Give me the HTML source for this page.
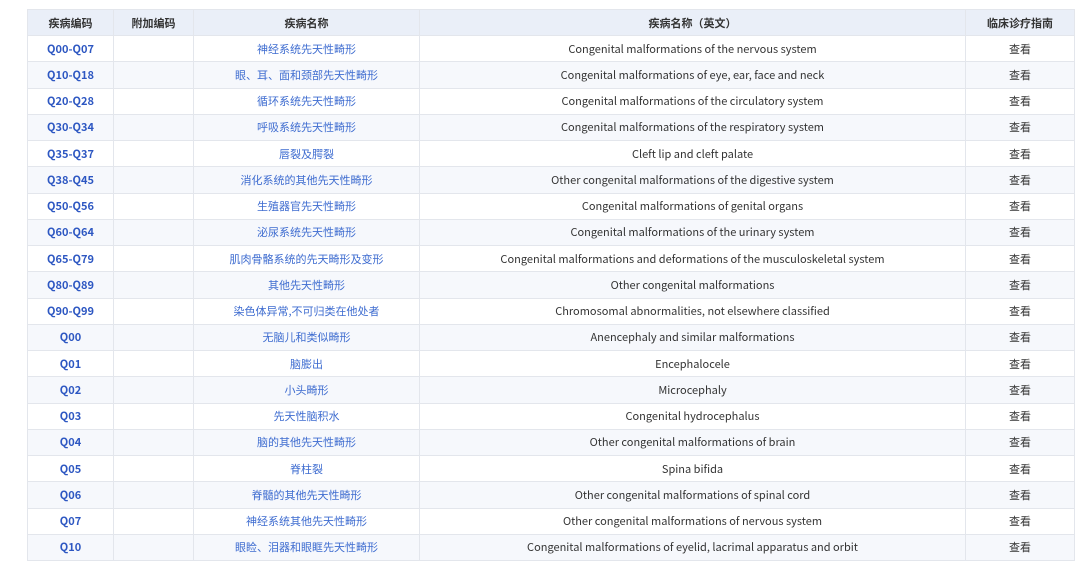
<!DOCTYPE html>
<html><head><meta charset="utf-8"><style>
body{margin:0;background:#fff;width:1080px;height:569px;overflow:hidden;font-family:"Noto Sans CJK SC",sans-serif;}
table{position:absolute;left:27px;top:9px;border-collapse:collapse;width:1047px;table-layout:fixed;font-size:11px;}
td,th{border:1px solid #e3e6ec;text-align:center;padding:0;height:25.25px;white-space:nowrap;line-height:14px;vertical-align:middle;}
th{background:#eaeff8;color:#333;font-weight:bold;height:25px;}
tr:nth-child(odd) td{background:#f6f8fc;}
td.c{color:#2d57c2;font-weight:bold;}
td.n{color:#3e6cd0;}
td.v,td.e{color:#333;}
</style></head><body>
<table>
<colgroup><col style="width:86px"><col style="width:80px"><col style="width:226px"><col style="width:546px"><col style="width:109px"></colgroup>
<tr><th>疾病编码</th><th>附加编码</th><th>疾病名称</th><th>疾病名称（英文）</th><th>临床诊疗指南</th></tr>
<tr><td class="c">Q00-Q07</td><td></td><td class="n">神经系统先天性畸形</td><td class="e">Congenital malformations of the nervous system</td><td class="v">查看</td></tr>
<tr><td class="c">Q10-Q18</td><td></td><td class="n">眼、耳、面和颈部先天性畸形</td><td class="e">Congenital malformations of eye, ear, face and neck</td><td class="v">查看</td></tr>
<tr><td class="c">Q20-Q28</td><td></td><td class="n">循环系统先天性畸形</td><td class="e">Congenital malformations of the circulatory system</td><td class="v">查看</td></tr>
<tr><td class="c">Q30-Q34</td><td></td><td class="n">呼吸系统先天性畸形</td><td class="e">Congenital malformations of the respiratory system</td><td class="v">查看</td></tr>
<tr><td class="c">Q35-Q37</td><td></td><td class="n">唇裂及腭裂</td><td class="e">Cleft lip and cleft palate</td><td class="v">查看</td></tr>
<tr><td class="c">Q38-Q45</td><td></td><td class="n">消化系统的其他先天性畸形</td><td class="e">Other congenital malformations of the digestive system</td><td class="v">查看</td></tr>
<tr><td class="c">Q50-Q56</td><td></td><td class="n">生殖器官先天性畸形</td><td class="e">Congenital malformations of genital organs</td><td class="v">查看</td></tr>
<tr><td class="c">Q60-Q64</td><td></td><td class="n">泌尿系统先天性畸形</td><td class="e">Congenital malformations of the urinary system</td><td class="v">查看</td></tr>
<tr><td class="c">Q65-Q79</td><td></td><td class="n">肌肉骨骼系统的先天畸形及变形</td><td class="e">Congenital malformations and deformations of the musculoskeletal system</td><td class="v">查看</td></tr>
<tr><td class="c">Q80-Q89</td><td></td><td class="n">其他先天性畸形</td><td class="e">Other congenital malformations</td><td class="v">查看</td></tr>
<tr><td class="c">Q90-Q99</td><td></td><td class="n">染色体异常,不可归类在他处者</td><td class="e">Chromosomal abnormalities, not elsewhere classified</td><td class="v">查看</td></tr>
<tr><td class="c">Q00</td><td></td><td class="n">无脑儿和类似畸形</td><td class="e">Anencephaly and similar malformations</td><td class="v">查看</td></tr>
<tr><td class="c">Q01</td><td></td><td class="n">脑膨出</td><td class="e">Encephalocele</td><td class="v">查看</td></tr>
<tr><td class="c">Q02</td><td></td><td class="n">小头畸形</td><td class="e">Microcephaly</td><td class="v">查看</td></tr>
<tr><td class="c">Q03</td><td></td><td class="n">先天性脑积水</td><td class="e">Congenital hydrocephalus</td><td class="v">查看</td></tr>
<tr><td class="c">Q04</td><td></td><td class="n">脑的其他先天性畸形</td><td class="e">Other congenital malformations of brain</td><td class="v">查看</td></tr>
<tr><td class="c">Q05</td><td></td><td class="n">脊柱裂</td><td class="e">Spina bifida</td><td class="v">查看</td></tr>
<tr><td class="c">Q06</td><td></td><td class="n">脊髓的其他先天性畸形</td><td class="e">Other congenital malformations of spinal cord</td><td class="v">查看</td></tr>
<tr><td class="c">Q07</td><td></td><td class="n">神经系统其他先天性畸形</td><td class="e">Other congenital malformations of nervous system</td><td class="v">查看</td></tr>
<tr><td class="c">Q10</td><td></td><td class="n">眼睑、泪器和眼眶先天性畸形</td><td class="e">Congenital malformations of eyelid, lacrimal apparatus and orbit</td><td class="v">查看</td></tr>
</table>
</body></html>
